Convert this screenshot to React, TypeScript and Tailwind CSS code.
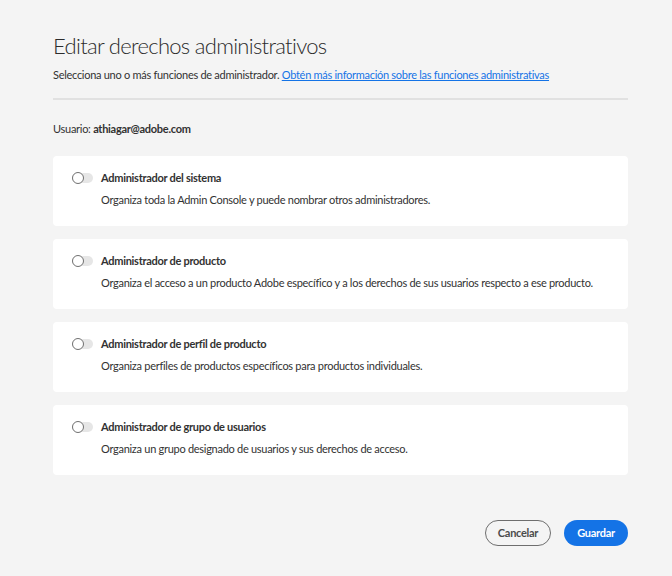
const roles = [
  {
    title: 'Administrador del sistema',
    desc: 'Organiza toda la Admin Console y puede nombrar otros administradores.',
  },
  {
    title: 'Administrador de producto',
    desc: 'Organiza el acceso a un producto Adobe específico y a los derechos de sus usuarios respecto a ese producto.',
  },
  {
    title: 'Administrador de perfil de producto',
    desc: 'Organiza perfiles de productos específicos para productos individuales.',
  },
  {
    title: 'Administrador de grupo de usuarios',
    desc: 'Organiza un grupo designado de usuarios y sus derechos de acceso.',
  },
];

function Toggle() {
  return (
    <div className="relative w-[21px] h-[10px] rounded-full bg-[#e6e6e6] shrink-0">
      <div className="absolute left-0 top-[-1px] w-[12px] h-[12px] rounded-full bg-white border-[1.5px] border-[#707070]" />
    </div>
  );
}

export default function App() {
  return (
    <div
      className="w-[672px] h-[576px] bg-[#f4f4f4] text-[#323232] pl-[53px] pr-[44px] pt-[32px] tracking-[-0.28px]"
      style={{ fontFamily: 'Lato, "Open Sans", sans-serif' }}
    >
      <h1 className="text-[22px] font-light leading-[28px] text-[#2c2c2c] tracking-[-0.7px]">
        Editar derechos administrativos
      </h1>
      <p className="mt-[8px] text-[11px] leading-[14px]">
        Selecciona uno o más funciones de administrador.{' '}
        <a href="#" className="text-[#1473e6] underline">
          Obtén más información sobre las funciones administrativas
        </a>
      </p>
      <div className="mt-[16px] h-[2px] bg-[#e1e1e1]" />
      <p className="mt-[22px] text-[11px] leading-[14px]">
        Usuario: <span className="font-bold">athiagar@adobe.com</span>
      </p>

      {/* Roles */}
      <div className="mt-[20px] flex flex-col gap-[13px]">
        {roles.map((r) => (
          <div key={r.title} className="h-[70px] bg-white rounded-[4px] pl-[19px] pt-[15px]">
            <div className="flex items-center gap-[8px]">
              <Toggle />
              <span className="text-[11px] font-bold leading-[14px]">{r.title}</span>
            </div>
            <p className="mt-[8px] ml-[29px] text-[11px] leading-[14px]">{r.desc}</p>
          </div>
        ))}
      </div>

      {/* Actions */}
      <div className="mt-[45px] flex justify-end gap-[13px]">
        <button className="h-[26px] w-[66px] rounded-full border-[1.5px] border-[#6e6e6e] text-[11px] font-bold text-[#4b4b4b]">
          Cancelar
        </button>
        <button className="h-[26px] w-[64px] rounded-full bg-[#1473e6] text-[11px] font-bold text-white">
          Guardar
        </button>
      </div>
    </div>
  );
}
